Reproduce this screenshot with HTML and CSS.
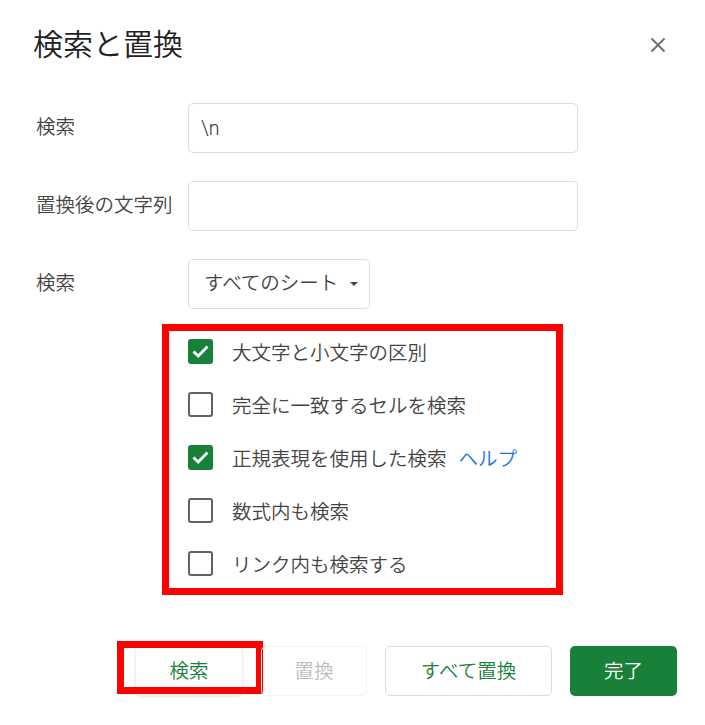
FILE: index.html
```html
<!DOCTYPE html>
<html lang="ja">
<head>
<meta charset="utf-8">
<title>検索と置換</title>
<link rel="stylesheet" href="styles.css">
</head>
<body>
<div class="dialog">
  <header class="head">
    <h1 class="title">検索と置換</h1>
    <span class="close" aria-label="閉じる">
      <svg width="16" height="16" viewBox="0 0 16 16"><path d="M1.5 1.5 L14.5 14.5 M14.5 1.5 L1.5 14.5" stroke="#6b6b6b" stroke-width="1.8" fill="none"/></svg>
    </span>
  </header>

  <div class="form">
    <div class="row">
      <span class="lbl">検索</span>
      <div class="field wide">\n</div>
    </div>
    <div class="row">
      <span class="lbl">置換後の文字列</span>
      <div class="field wide"></div>
    </div>
    <div class="row">
      <span class="lbl">検索</span>
      <div class="field select"><span class="seltext">すべてのシート</span><span class="caret"></span></div>
    </div>
  </div>

  <div class="opts">
    <div class="opt"><span class="cb on"><svg width="25" height="25" viewBox="0 0 25 25"><path d="M5.5 12.5 L10.2 17 L19.5 7.5" stroke="#fff" stroke-width="2.8" fill="none"/></svg></span><span class="otext">大文字と小文字の区別</span></div>
    <div class="opt"><span class="cb"></span><span class="otext">完全に一致するセルを検索</span></div>
    <div class="opt"><span class="cb on"><svg width="25" height="25" viewBox="0 0 25 25"><path d="M5.5 12.5 L10.2 17 L19.5 7.5" stroke="#fff" stroke-width="2.8" fill="none"/></svg></span><span class="otext">正規表現を使用した検索</span><span class="help">ヘルプ</span></div>
    <div class="opt"><span class="cb"></span><span class="otext">数式内も検索</span></div>
    <div class="opt"><span class="cb"></span><span class="otext">リンク内も検索する</span></div>
  </div>

  <div class="actions">
    <div class="btn find">検索<span class="mark"></span></div>
    <div class="btn ghost disabled">置換</div>
    <div class="btn outline all">すべて置換</div>
    <div class="btn primary">完了</div>
  </div>
</div>
</body>
</html>
```

FILE: styles.css
```css
* { box-sizing: border-box; }
html, body { margin: 0; padding: 0; background: #fff; }
body {
  font-family: Roboto, "Noto Sans CJK JP", sans-serif;
  font-weight: 350;
  color: #444;
  width: 705px;
  height: 725px;
  overflow: hidden;
}
.dialog { width: 705px; }

.head {
  display: flex;
  align-items: center;
  justify-content: space-between;
  padding: 27px 39px 0 33px;
  height: 63px;
}
.title {
  margin: 0;
  font-size: 30px;
  line-height: 36px;
  font-weight: 350;
  color: #222;
}
.close {
  display: flex;
  width: 16px;
  height: 16px;
  margin-top: -1px;
}

.form {
  margin-top: 40px;
  display: flex;
  flex-direction: column;
  gap: 28px;
}
.row {
  display: flex;
  align-items: center;
  padding-left: 36px;
  height: 50px;
}
.lbl {
  width: 152px;
  font-size: 19.5px;
  color: #444;
  margin-bottom: 5px;
}
.field {
  height: 50px;
  border: 1px solid #dadce0;
  border-radius: 5px;
  display: flex;
  align-items: center;
  font-size: 19.5px;
  color: #333;
}
.wide { width: 390px; padding-left: 12px; }
.select {
  width: 182px;
  padding-left: 15px;
  color: #444;
}
.seltext { margin-bottom: 5px; }
.caret {
  margin-left: 12px;
  width: 0;
  height: 0;
  border-left: 4px solid transparent;
  border-right: 4px solid transparent;
  border-top: 4.5px solid #444;
}

.opts {
  margin: 15px 0 0 162px;
  width: 401px;
  border: 7px solid #ff0000;
  padding: 8px 0 12px 19px;
  display: flex;
  flex-direction: column;
  gap: 28px;
}
.opt {
  display: flex;
  align-items: center;
  height: 25px;
}
.cb {
  width: 25px;
  height: 25px;
  border: 2.5px solid #5f6368;
  border-radius: 3px;
  display: flex;
  align-items: center;
  justify-content: center;
  flex: none;
}
.cb.on {
  background: #188038;
  border: none;
}
.otext {
  margin-left: 19px;
  font-size: 19.5px;
  color: #444;
}
.help {
  margin-left: 12px;
  font-size: 19.5px;
  color: #1a73e8;
}

.actions {
  margin: 51px 0 0 135px;
  display: flex;
  gap: 18px;
}
.btn {
  position: relative;
  height: 50px;
  border-radius: 5px;
  display: flex;
  align-items: center;
  justify-content: center;
  font-size: 19.5px;
  color: #188038;
  padding-bottom: 4px;
}
.find {
  width: 108px;
  border: 1px solid #eceef2;
  box-shadow: 0 1px 2px rgba(60, 64, 67, 0.12);
}
.mark {
  position: absolute;
  left: -19px;
  top: -6px;
  width: 146px;
  height: 53px;
  border: 7px solid #ff0000;
}
.ghost {
  width: 106px;
  border: 1px solid #f3f3f3;
}
.disabled { color: #bdbdbd; }
.outline {
  width: 167px;
  border: 1px solid #dadce0;
}
.primary {
  width: 107px;
  background: #188038;
  color: #fff;
}
```
